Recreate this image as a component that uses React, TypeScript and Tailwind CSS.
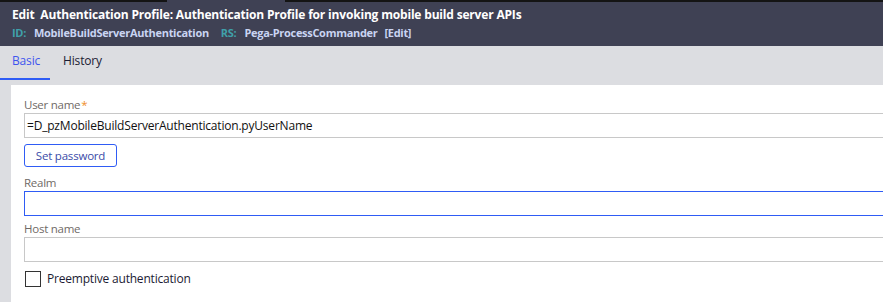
const font = { fontFamily: '"Open Sans", "Noto Sans", sans-serif' };

const Field = ({
  label,
  required,
  value,
  focused,
}: {
  label: string;
  required?: boolean;
  value?: string;
  focused?: boolean;
}) => {
  return (
    <div>
      <div className="text-[11.5px] leading-[16px] tracking-[-0.25px] text-[#6f6a66]">
        {label}
        {required && <span className="ml-[1px] text-[#ef8f2a]">*</span>}
      </div>
      <div
        className={`h-[25px] w-[880px] border bg-white px-[2px] text-[12px] leading-[23px] tracking-[-0.2px] text-[#111] ${
          focused ? "border-[#2f5cf5]" : "border-[#c8c8c8]"
        }`}
      >
        {value}
      </div>
    </div>
  );
};

export default function App() {
  return (
    <div className="h-[302px] w-[883px] overflow-hidden bg-[#dcdde1]" style={font}>
      {/* header */}
      <div className="h-[46px] bg-[#3f4154]">
        <div className="flex h-[2px]">
          <div className="w-[167px] bg-[#141414]" />
          <div className="w-[118px]" />
          <div className="flex-1 bg-[#141414]" />
        </div>
        <div className="px-[12px] pt-[4px]">
          <div className="text-[12px] font-bold leading-[18px] tracking-[-0.18px] text-white">
            Edit&nbsp; Authentication Profile: Authentication Profile for invoking mobile build server APIs
          </div>
          <div className="mt-[2px] flex text-[11px] font-bold leading-[14px] tracking-[-0.3px]">
            <span className="text-[#3fa0aa]">ID:</span>
            <span className="ml-[8px] text-[#c9d4f2]">MobileBuildServerAuthentication</span>
            <span className="ml-[12px] text-[#3fa0aa]">RS:</span>
            <span className="ml-[8px] text-[#c9d4f2]">Pega-ProcessCommander</span>
            <span className="ml-[7px] text-[#c9d4f2]">[Edit]</span>
          </div>
        </div>
      </div>

      {/* tabs */}
      <div className="flex h-[39px] items-start pt-[6px] text-[12px] leading-[18px] tracking-[-0.15px]">
        <div className="w-[50px] border-b-2 border-[#2f5cf5] pb-[8px] pl-[12px] text-[#3f55ee]">Basic</div>
        <div className="pl-[13px] text-[#1b1b33]">History</div>
      </div>

      {/* form panel */}
      <div className="ml-[11px] h-[220px] bg-white pl-[13px] pt-[12px]">
        <Field label="User name" required value="=D_pzMobileBuildServerAuthentication.pyUserName" />
        <button className="mt-[6px] h-[23px] w-[93px] rounded-[3px] border border-[#2f5cf5] text-[11.5px] leading-[20px] tracking-[-0.2px] text-[#3a4ba8]">
          Set password
        </button>
        <div className="mt-[8px]">
          <Field label="Realm" focused />
        </div>
        <div className="mt-[5px]">
          <Field label="Host name" />
        </div>
        <label className="mt-[9px] flex items-center gap-[6px] text-[12px] leading-[16px] tracking-[-0.2px] text-[#1b1b33]">
          <span className="ml-[1px] h-[16px] w-[16px] border border-[#333]" />
          Preemptive authentication
        </label>
      </div>
    </div>
  );
}
